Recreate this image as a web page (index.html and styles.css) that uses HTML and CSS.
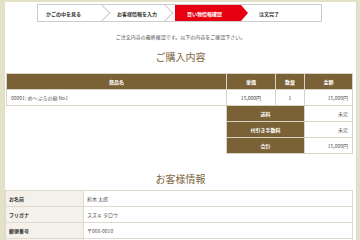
FILE: index.html
```html
<!DOCTYPE html>
<html lang="ja">
<head>
    <meta charset="UTF-8">
    <meta name="viewport" content="width=device-width, initial-scale=1.0">
    <title>ご注文内容の確認</title>
    <link rel="stylesheet" href="styles.css">
</head>
<body>
    <div class="page">
        <!-- Order steps -->
        <ol class="steps">
            <li class="step step-1">かごの中を見る</li>
            <li class="step step-2">お客様情報を入力</li>
            <li class="step step-3 active">買い物情報確認</li>
            <li class="step step-4">注文完了</li>
        </ol>

        <p class="intro">ご注文内容の最終確認です。以下の内容をご確認下さい。</p>

        <!-- Purchase details -->
        <h2 class="section-title">ご購入内容</h2>
        <table class="order">
            <thead>
                <tr>
                    <th class="col-name">商品名</th>
                    <th class="col-price">単価</th>
                    <th class="col-qty">数量</th>
                    <th class="col-total">金額</th>
                </tr>
            </thead>
            <tbody>
                <tr>
                    <td class="item">00001: め～ぷるの樹 No1</td>
                    <td class="center">15,000円</td>
                    <td class="center">1</td>
                    <td class="right">15,000円</td>
                </tr>
                <tr class="sum">
                    <td class="blank"></td>
                    <th colspan="2">送料</th>
                    <td class="right">未定</td>
                </tr>
                <tr class="sum">
                    <td class="blank"></td>
                    <th colspan="2">代引き手数料</th>
                    <td class="right">未定</td>
                </tr>
                <tr class="sum">
                    <td class="blank"></td>
                    <th colspan="2">合計</th>
                    <td class="right">15,000円</td>
                </tr>
            </tbody>
        </table>

        <!-- Customer details -->
        <h2 class="section-title second">お客様情報</h2>
        <table class="customer">
            <tr>
                <th>お名前</th>
                <td>鈴木 太郎</td>
            </tr>
            <tr>
                <th>フリガナ</th>
                <td>スズキ タロウ</td>
            </tr>
            <tr>
                <th>郵便番号</th>
                <td>〒068-0010</td>
            </tr>
            <tr>
                <th></th>
                <td></td>
            </tr>
        </table>
    </div>
</body>
</html>
```

FILE: styles.css
```css
body {
    margin: 0;
    padding: 0;
    background-color: #e4e2c6;
    font-family: "Noto Sans CJK JP", "Noto Sans", sans-serif;
    color: #444;
}
.page {
    margin: 2px 3px 0 4px;
    min-height: 238px;
    background: #fff;
    border-left: 1px solid #dcdcd0;
    border-right: 1px solid #dcdcd0;
    overflow: hidden;
}

/* steps */
.steps {
    display: flex;
    width: 283px;
    height: 16px;
    margin: 2px 0 0 32px;
    padding: 0;
    list-style: none;
    border: 1px solid #ccc;
}
.step {
    position: relative;
    display: flex;
    align-items: center;
    padding-left: 8px;
    font-size: 5px;
    font-weight: bold;
    color: #333;
    box-sizing: border-box;
}
.step-1 { width: 71px; }
.step-2 { width: 66px; }
.step-3 { width: 66px; }
.step-4 { flex: 1; padding-left: 18px; }
.step-1::after,
.step-2::after {
    content: "";
    position: absolute;
    right: 1px;
    top: 2px;
    width: 11px;
    height: 11px;
    border-top: 1px solid #ccc;
    border-right: 1px solid #ccc;
    transform: rotate(45deg);
}
.step-2::after {
    right: 4px;
}
.step.active {
    background: #e60012;
    color: #fff;
    padding-left: 12px;
}
.step.active::after {
    content: "";
    position: absolute;
    right: -7px;
    top: 0;
    border-top: 8px solid transparent;
    border-bottom: 8px solid transparent;
    border-left: 7px solid #e60012;
}

.intro {
    margin: 11px 0 0;
    font-size: 5px;
    line-height: 8px;
    text-align: center;
    color: #555;
}
.section-title {
    margin: 10px 0 10px;
    font-size: 10px;
    line-height: 12px;
    font-weight: normal;
    text-align: center;
    color: #7d6540;
}
.section-title.second {
    margin: 19px 0 5px;
}

/* order table */
.order {
    width: 347px;
    margin-left: 1px;
    border-collapse: collapse;
    font-size: 5px;
}
.order th,
.order td {
    height: 15px;
    padding: 0 4px;
    border: 1px solid #d8d3c4;
}
.order th {
    background: #7a6136;
    color: #fff;
    font-weight: bold;
}
.order .col-name { width: 211px; }
.order .col-price { width: 40px; }
.order .col-qty { width: 20px; }
.order .item {
    color: #555;
}
.order .center { text-align: center; }
.order .right { text-align: right; color: #555; }
.order td.blank {
    border: none;
    border-right: 1px solid #d8d3c4;
}

/* customer table */
.customer {
    width: 348px;
    border-collapse: collapse;
    font-size: 5px;
}
.customer th,
.customer td {
    height: 15px;
    padding: 0 3px;
    border: 1px solid #dedad0;
    text-align: left;
}
.customer th {
    width: 71px;
    background: #f3f1ea;
    color: #333;
    font-weight: bold;
}
.customer td {
    color: #555;
}
```
